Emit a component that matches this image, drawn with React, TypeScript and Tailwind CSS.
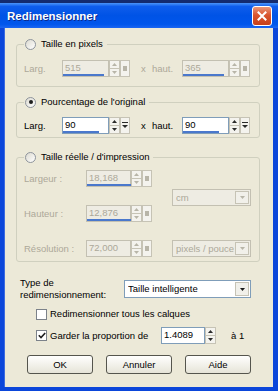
import React from "react";

function Tri({ dir, color }: { dir: "up" | "down"; color: string }) {
  return (
    <svg width="5" height="3" viewBox="0 0 5 3" className="block">
      {dir === "up" ? <path d="M2.5 0 L5 3 L0 3Z" fill={color} /> : <path d="M0 0 L5 0 L2.5 3Z" fill={color} />}
    </svg>
  );
}

function UpDown({ disabled }: { disabled?: boolean }) {
  const c = disabled ? "#B8B5A8" : "#2a2a2a";
  return (
    <div className="flex flex-col w-[11px] h-[17px]">
      <div className="h-[9px] flex items-center justify-center border border-[#C6C3B5] bg-[#F4F3EE]">
        <Tri dir="up" color={c} />
      </div>
      <div className="h-[8px] flex items-center justify-center border border-t-0 border-[#C6C3B5] bg-[#F4F3EE]">
        <Tri dir="down" color={c} />
      </div>
    </div>
  );
}

function Popup({ disabled }: { disabled?: boolean }) {
  return (
    <div className="w-[10px] h-[17px] flex items-center justify-center border border-[#C6C3B5] bg-[#F4F3EE]">
      {disabled ? (
        <div className="w-[4px] h-[5px] bg-[#B8B5A8]" />
      ) : (
        <svg width="6" height="7" viewBox="0 0 6 7" className="block">
          <rect x="0" y="0" width="6" height="1" fill="#2a2a2a" />
          <path d="M0 3 L6 3 L3 6Z" fill="#2a2a2a" />
        </svg>
      )}
    </div>
  );
}

function SpinField({
  value,
  disabled,
  bar,
  popup = true,
  inputW,
}: {
  value: string;
  disabled?: boolean;
  bar?: string;
  popup?: boolean;
  inputW: string;
}) {
  return (
    <div className="flex items-center h-[17px]">
      <div
        className={`relative ${inputW} h-[17px] border ${
          disabled ? "border-[#C3C0B2] bg-[#EEECE3] text-[#ACA899]" : "border-[#7F9DB9] bg-white text-black"
        } pl-[2px] leading-[14px]`}
      >
        {value}
        {bar && <div className={`absolute left-0 bottom-0 h-[2px] bg-[#4A78CC] ${bar}`} />}
      </div>
      <UpDown disabled={disabled} />
      {popup && <Popup disabled={disabled} />}
    </div>
  );
}

function Radio({ checked }: { checked?: boolean }) {
  return (
    <span className="w-[11px] h-[11px] rounded-full border border-[#8E949C] bg-gradient-to-br from-[#DCDAD0] to-white flex items-center justify-center">
      {checked && <span className="w-[4px] h-[4px] rounded-full bg-[#1E1E1E]" />}
    </span>
  );
}

function Check({ checked }: { checked?: boolean }) {
  return (
    <span className="w-[11px] h-[11px] border border-[#7C828A] bg-white flex items-center justify-center">
      {checked && (
        <svg width="8" height="7" viewBox="0 0 8 7" className="block">
          <path d="M0.8 3.3 L3 5.5 L7.2 1" stroke="#1E1E1E" strokeWidth="1.6" fill="none" />
        </svg>
      )}
    </span>
  );
}

function Combo({ text, disabled, w }: { text: string; disabled?: boolean; w: string }) {
  return (
    <div
      className={`${w} flex items-center justify-between border ${
        disabled ? "border-[#C3C0B2] bg-[#EEECE3] text-[#ACA899]" : "border-[#7F9DB9] bg-white text-black"
      } pl-[3px] pr-[1px]`}
    >
      <span className="whitespace-nowrap overflow-hidden">{text}</span>
      <span className="w-[14px] h-[calc(100%-2px)] flex items-center justify-center border border-[#C6C3B5] bg-[#F1F0EA]">
        <Tri dir="down" color={disabled ? "#B8B5A8" : "#1a1a1a"} />
      </span>
    </div>
  );
}

function Group({
  label,
  checked,
  className,
  children,
}: {
  label: string;
  checked?: boolean;
  className: string;
  children: React.ReactNode;
}) {
  return (
    <fieldset className={`border border-[#D0D0BF] rounded-[3px] px-[7px] m-0 ${className}`}>
      <legend className="pl-[1px] pr-[4px] leading-[14px]">
        <span className="flex items-center gap-[5px] h-[14px] text-black">
          <Radio checked={checked} />
          <span>{label}</span>
        </span>
      </legend>
      {children}
    </fieldset>
  );
}

function Btn({ children }: { children: React.ReactNode }) {
  return (
    <div className="w-[66px] h-[19px] rounded-[3px] border border-[#55554D] bg-gradient-to-b from-[#FFFFFE] to-[#E6E4D8] flex items-center justify-center text-black">
      {children}
    </div>
  );
}

export default function App() {
  return (
    <div className="w-[278px] h-[391px] flex flex-col bg-[#0A44D6] font-['Liberation_Sans',Arial,sans-serif] text-[9.5px] leading-[14px] overflow-hidden select-none">
      <div className="h-[3px] bg-[#142B6E]" />
      <div className="h-[25px] flex items-center justify-between pl-[7px] pr-[6px] bg-[linear-gradient(180deg,#4B95F8_0%,#0F5DEB_14%,#0053E6_50%,#0056EC_85%,#1B66F2_100%)]">
        <span className="text-white font-bold text-[11.5px] [text-shadow:1px_1px_0_#0B2A8C] pt-[1px]">Redimensionner</span>
        <div className="w-[20px] h-[20px] rounded-[3px] border border-white bg-[linear-gradient(180deg,#E99679_0%,#D9552F_45%,#C6401A_100%)] flex items-center justify-center">
          <svg width="10" height="10" viewBox="0 0 10 10" className="block">
            <path d="M1.5 1.5 L8.5 8.5 M8.5 1.5 L1.5 8.5" stroke="white" strokeWidth="2" strokeLinecap="square" />
          </svg>
        </div>
      </div>
      <div className="flex-1 flex pl-[4px] pr-[5px] pb-[4px] bg-[#0B46DA]">
        <div className="flex-1 bg-[#ECE9D8] flex flex-col pl-[11px] pr-[13px] border-l border-[#3C6BE0]">
          {/* Group 1 */}
          <Group label="Taille en pixels" className="mt-[9px] pt-[9px] pb-[9px]">
            <div className="flex items-center h-[17px] text-[#ACA899]">
              <span className="w-[38px]">Larg.</span>
              <SpinField value="515" disabled bar="w-[41px]" inputW="w-[47px]" />
              <span className="ml-[11px] w-[11px]">x</span>
              <span className="w-[30px]">haut.</span>
              <SpinField value="365" disabled bar="w-[41px]" inputW="w-[47px]" />
            </div>
          </Group>

          {/* Group 2 */}
          <Group label="Pourcentage de l'original" checked className="mt-[8px] pt-[8px] pb-[3px]">
            <div className="flex items-center h-[17px] text-black">
              <span className="w-[38px]">Larg.</span>
              <SpinField value="90" bar="w-[36px]" inputW="w-[47px]" />
              <span className="ml-[11px] w-[11px]">x</span>
              <span className="w-[30px]">haut.</span>
              <SpinField value="90" bar="w-[36px]" inputW="w-[47px]" />
            </div>
          </Group>

          {/* Group 3 */}
          <Group label="Taille réelle / d'impression" className="mt-[12px] pt-[6px] pb-[4px]">
            <div className="flex text-[#ACA899]">
              <div className="flex flex-col gap-[18px]">
                <div className="flex items-center h-[17px]">
                  <span className="w-[62px]">Largeur :</span>
                  <SpinField value="18,168" disabled bar="w-[44px]" inputW="w-[45px]" />
                </div>
                <div className="flex items-center h-[17px]">
                  <span className="w-[62px]">Hauteur :</span>
                  <SpinField value="12,876" disabled bar="w-[44px]" inputW="w-[45px]" />
                </div>
                <div className="flex items-center h-[17px]">
                  <span className="w-[62px]">Résolution :</span>
                  <SpinField value="72,000" disabled inputW="w-[45px]" />
                </div>
              </div>
              <div className="flex flex-col ml-[20px]">
                <div className="mt-[19px]">
                  <Combo text="cm" disabled w="w-[79px] h-[17px]" />
                </div>
                <div className="mt-[34px]">
                  <Combo text="pixels / pouce" disabled w="w-[79px] h-[17px]" />
                </div>
              </div>
            </div>
          </Group>

          {/* Type */}
          <div className="mt-[15px] ml-[4px] flex items-center text-black">
            <div className="w-[104px] leading-[12px]">
              <div>Type de</div>
              <div>redimensionnement:</div>
            </div>
            <Combo text="Taille intelligente" w="w-[127px] h-[18px]" />
          </div>

          {/* Checkboxes */}
          <div className="mt-[6px] ml-[20px] h-[14px] flex items-center gap-[3px] text-black">
            <Check />
            <span>Redimensionner tous les calques</span>
          </div>
          <div className="mt-[6px] ml-[20px] h-[17px] flex items-center text-black">
            <Check checked />
            <span className="ml-[3px] w-[111px]">Garder la proportion de</span>
            <SpinField value="1.4089" popup={false} inputW="w-[44px]" />
            <span className="ml-[15px]">à 1</span>
          </div>

          {/* Buttons */}
          <div className="mt-[11px] ml-[11px] flex gap-[13px]">
            <Btn>OK</Btn>
            <Btn>Annuler</Btn>
            <Btn>Aide</Btn>
          </div>
        </div>
      </div>
    </div>
  );
}
